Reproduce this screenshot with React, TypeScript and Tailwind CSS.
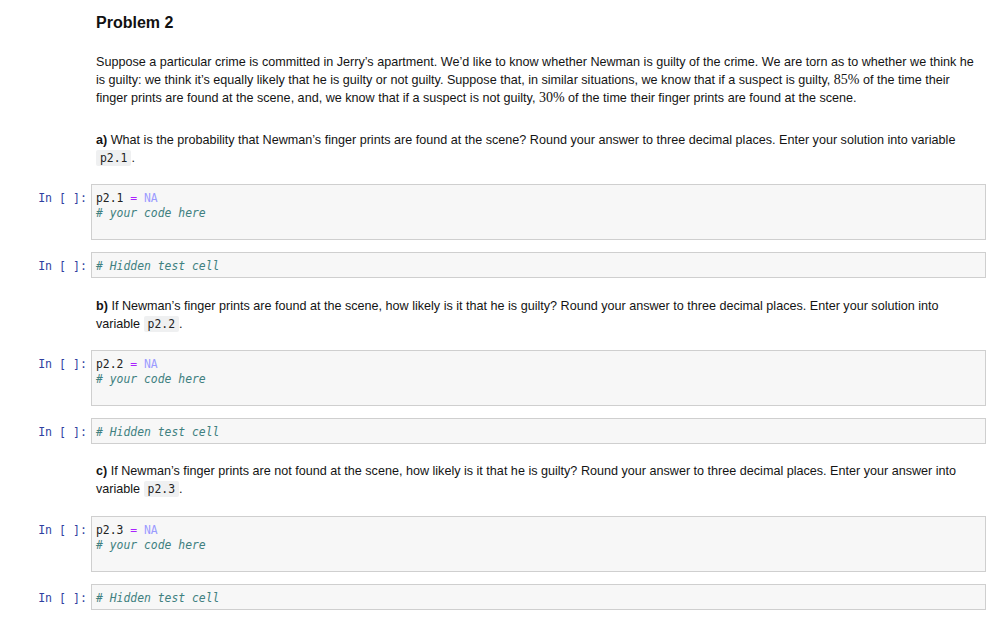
const mono = { fontFamily: '"DejaVu Sans Mono", "Liberation Mono", monospace' };

const Label = () => (
  <div
    className="w-[91px] shrink-0 pr-[4px] pt-[7px] text-right text-[11.6px] leading-[15px] text-[#303f9f]"
    style={mono}
  >
    In&nbsp;[&nbsp;]:
  </div>
);

const CodeCell = ({ name }: { name: string }) => (
  <div className="flex">
    <Label />
    <div
      className="h-[56px] flex-1 border border-[#cfcfcf] bg-[#f7f7f7] px-[4px] pt-[6px] text-[11.4px] leading-[15px]"
      style={mono}
    >
      <div>
        <span className="text-[#222]">{name}</span>
        <span className="text-[#aa22ff]"> = </span>
        <span className="text-[#9b9bff]">NA</span>
      </div>
      <div className="italic text-[#408080]"># your code here</div>
    </div>
  </div>
);

const HiddenCell = () => (
  <div className="flex">
    <Label />
    <div
      className="h-[26px] flex-1 border border-[#cfcfcf] bg-[#f7f7f7] px-[4px] pt-[6px] text-[11.4px] leading-[15px] italic text-[#408080]"
      style={mono}
    >
      # Hidden test cell
    </div>
  </div>
);

const Code = ({ children }: { children: string }) => (
  <code
    className="rounded-[2px] bg-[#eff0f1] px-[4px] py-[1px] text-[11.4px] text-[#222]"
    style={mono}
  >
    {children}
  </code>
);

const Math = ({ children }: { children: string }) => (
  <span className="text-[14px]" style={{ fontFamily: '"Liberation Serif", serif' }}>
    {children}
  </span>
);

const Text = ({ children, className = '' }: { children: React.ReactNode; className?: string }) => (
  <div className={`flex ${className}`}>
    <div className="w-[91px] shrink-0" />
    <p className="flex-1 pl-[5px] pr-[12px] text-[12.6px] leading-[18px] text-[#141414]">{children}</p>
  </div>
);

export default function App() {
  return (
    <div
      className="h-[630px] w-[1003px] overflow-hidden bg-white pr-[17px]"
      style={{ fontFamily: '"Liberation Sans", Arial, sans-serif' }}
    >
      <div className="flex pt-[13px]">
        <div className="w-[91px] shrink-0" />
        <h2 className="pl-[5px] text-[16px] font-bold leading-[20px] text-[#111]">Problem 2</h2>
      </div>

      <Text className="mt-[20px]">
        Suppose a particular crime is committed in Jerry’s apartment. We’d like to know whether Newman is
        guilty of the crime. We are torn as to whether we think he is guilty: we think it’s equally likely that
        he is guilty or not guilty. Suppose that, in similar situations, we know that if a suspect is guilty,{' '}
        <Math>85%</Math> of the time their finger prints are found at the scene, and, we know that if a suspect
        is not guilty, <Math>30%</Math> of the time their finger prints are found at the scene.
      </Text>

      <Text className="mt-[24px]">
        <b>a)</b> What is the probability that Newman’s finger prints are found at the scene? Round your answer
        to three decimal places. Enter your solution into variable <Code>p2.1</Code>.
      </Text>

      <div className="mt-[17px]">
        <CodeCell name="p2.1" />
      </div>
      <div className="mt-[12px]">
        <HiddenCell />
      </div>

      <Text className="mt-[19px]">
        <b>b)</b> If Newman’s finger prints are found at the scene, how likely is it that he is guilty? Round your
        answer to three decimal places. Enter your solution into variable <Code>p2.2</Code>.
      </Text>

      <div className="mt-[17px]">
        <CodeCell name="p2.2" />
      </div>
      <div className="mt-[12px]">
        <HiddenCell />
      </div>

      <Text className="mt-[18px]">
        <b>c)</b> If Newman’s finger prints are not found at the scene, how likely is it that he is guilty? Round
        your answer to three decimal places. Enter your answer into variable <Code>p2.3</Code>.
      </Text>

      <div className="mt-[18px]">
        <CodeCell name="p2.3" />
      </div>
      <div className="mt-[12px]">
        <HiddenCell />
      </div>
    </div>
  );
}
